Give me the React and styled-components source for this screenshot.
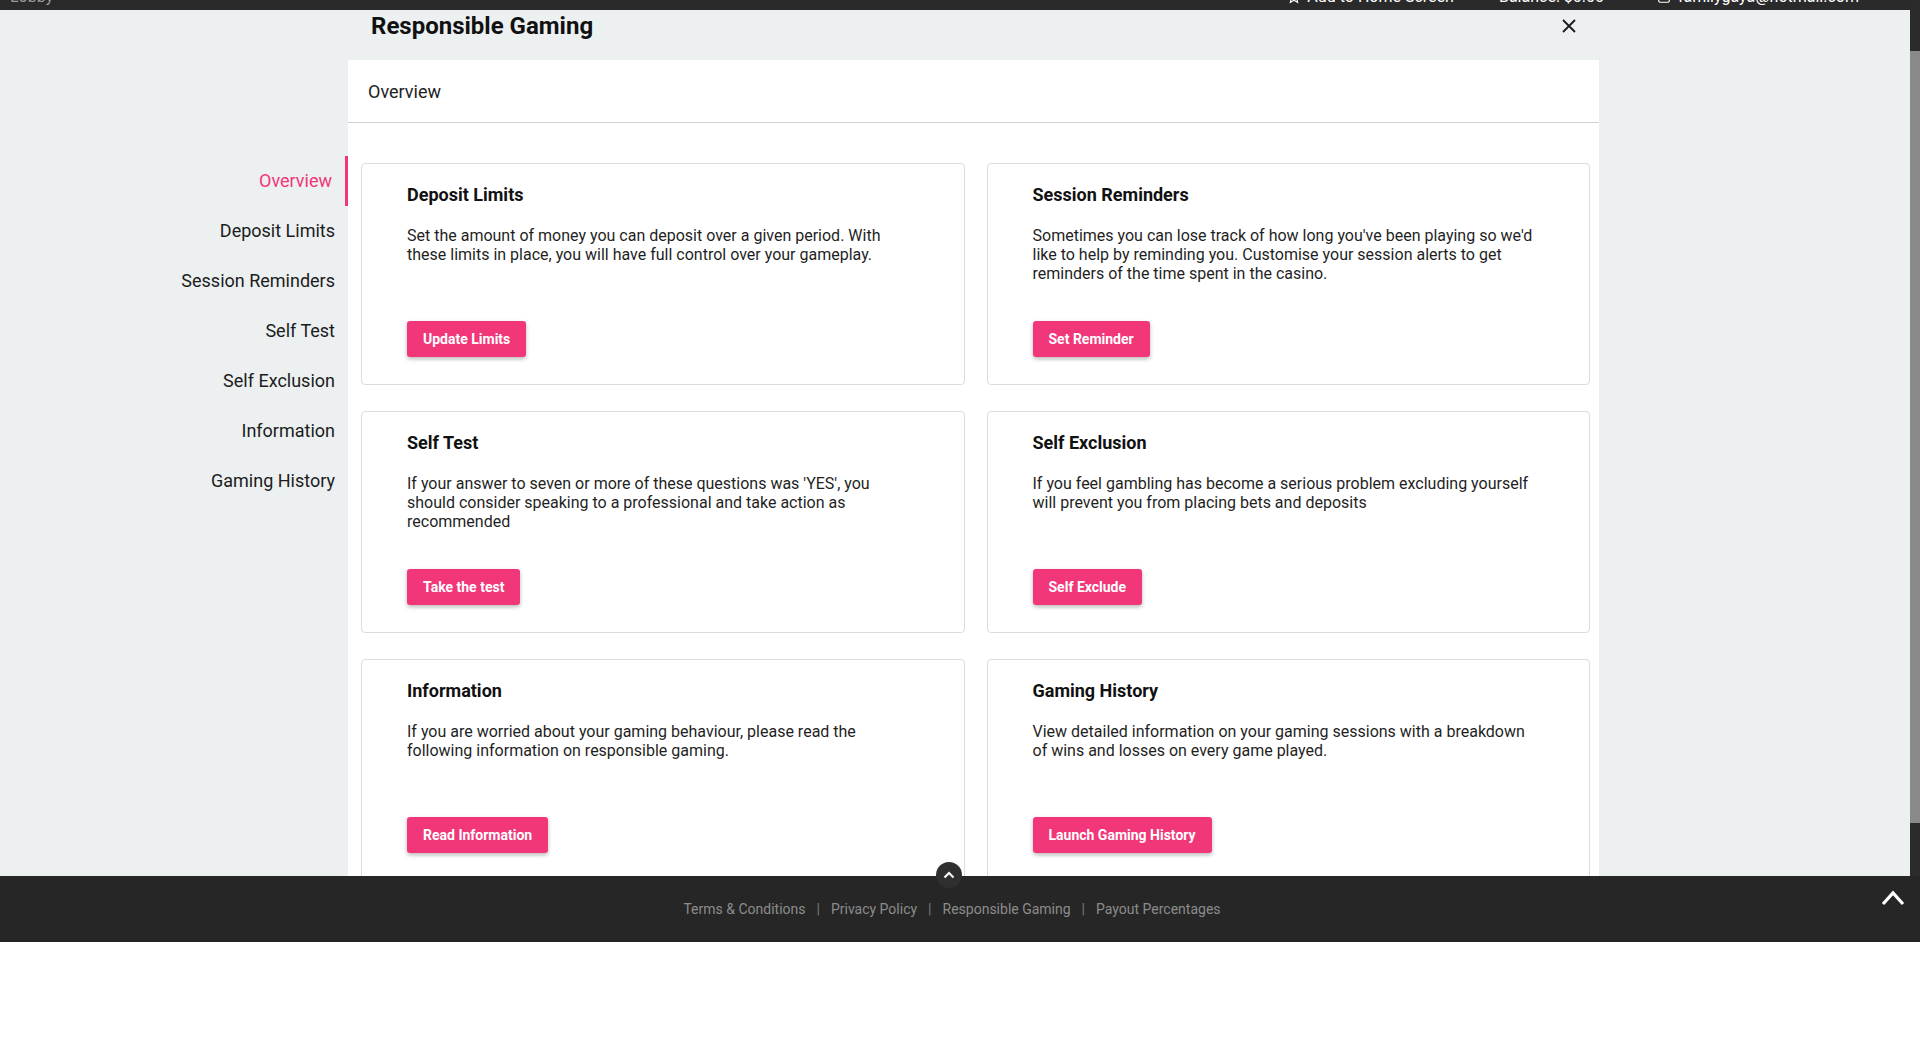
import React from "react";
import styled, { createGlobalStyle } from "styled-components";

const GlobalStyle = createGlobalStyle`
  html, body { margin: 0; padding: 0; background: #ffffff; }
  body { font-family: Roboto, "Liberation Sans", Arial, sans-serif; overflow: hidden; }
  * { box-sizing: border-box; }
`;

const PINK = "#f2367a";

const Page = styled.div`
  width: 1920px;
  height: 1060px;
  display: flex;
  flex-direction: column;
  background: #ffffff;
`;

const Viewport = styled.div`
  height: 876px;
  display: flex;
  flex-direction: row;
`;

const Main = styled.div`
  flex: 1;
  display: flex;
  flex-direction: column;
  min-width: 0;
`;

const TopBar = styled.div`
  height: 10px;
  background: #2a2a2a;
  overflow: hidden;
  display: flex;
  align-items: flex-end;
`;

const TopBarInner = styled.div`
  height: 26px;
  flex: none;
  width: 100%;
  display: flex;
  align-items: center;
  padding: 0 51px 0 10px;
  font-size: 16px;
  line-height: 26px;
  color: #ffffff;
`;

const TopLeft = styled.span`
  color: #9a9a9a;
  flex: 1;
`;

const TopItem = styled.span`
  display: flex;
  align-items: center;
  gap: ${(p) => p.$inner || 8}px;
  margin-left: ${(p) => p.$gap || 45}px;
  white-space: nowrap;
`;

const ScrollRail = styled.div`
  width: 10px;
  flex: none;
  background: #2b2b2b;
  padding-top: 51px;
`;

const Thumb = styled.div`
  height: 772px;
  background: #8a8a8a;
`;

const ModalArea = styled.div`
  flex: 1;
  background: #ecf0f1;
  overflow: hidden;
  display: flex;
  flex-direction: column;
`;

const HeaderRow = styled.div`
  margin-left: 348px;
  width: 1251px;
  height: 50px;
  display: flex;
  align-items: flex-start;
  justify-content: space-between;
  padding: 0 22px 0 23px;
`;

const Title = styled.h1`
  margin: 0;
  font-size: 24px;
  line-height: 32px;
  font-weight: 700;
  color: #111111;
`;

const CloseButton = styled.button`
  border: none;
  background: transparent;
  padding: 0;
  height: 32px;
  width: 16px;
  display: flex;
  align-items: center;
  justify-content: center;
  cursor: pointer;
`;

const Body = styled.div`
  flex: 1;
  display: flex;
  min-height: 0;
`;

const Sidebar = styled.nav`
  width: 348px;
  flex: none;
  padding-top: 96px;
  display: flex;
  flex-direction: column;
`;

const NavItem = styled.a`
  display: block;
  height: 50px;
  line-height: 50px;
  text-align: right;
  padding-right: 13px;
  font-size: 18px;
  color: ${(p) => (p.$active ? PINK : "#1c1c1c")};
  border-right: ${(p) => (p.$active ? `3px solid ${PINK}` : "none")};
  text-decoration: none;
  cursor: pointer;
`;

const Panel = styled.section`
  width: 1251px;
  flex: none;
  background: #ffffff;
  display: flex;
  flex-direction: column;
`;

const PanelHeader = styled.div`
  height: 63px;
  flex: none;
  border-bottom: 1px solid #d0d0d0;
  display: flex;
  align-items: center;
  padding-left: 20px;
  font-size: 18px;
  color: #1e1e1e;
`;

const CardGrid = styled.div`
  display: grid;
  grid-template-columns: 1fr 1fr;
  grid-auto-rows: 222px;
  column-gap: 22px;
  row-gap: 26px;
  padding: 40px 9px 0 13px;
`;

const Card = styled.article`
  border: 1px solid #dcdcdc;
  border-radius: 4px;
  padding: 20px 45px 27px 45px;
  display: flex;
  flex-direction: column;
  align-items: flex-start;
`;

const CardTitle = styled.h2`
  margin: 0;
  font-size: 18px;
  line-height: 22px;
  font-weight: 700;
  color: #111111;
`;

const CardText = styled.p`
  margin: 20px 0 0 0;
  max-width: 508px;
  font-size: 16px;
  line-height: 19px;
  color: #1f1f1f;
`;

const PinkButton = styled.button`
  margin-top: auto;
  height: 36px;
  padding: 0 16px;
  border: none;
  border-radius: 3px;
  background: ${PINK};
  color: #ffffff;
  font-family: Roboto, "Liberation Sans", Arial, sans-serif;
  font-size: 14px;
  font-weight: 700;
  box-shadow: 0 2px 4px rgba(0, 0, 0, 0.28);
  cursor: pointer;
`;

const Footer = styled.footer`
  height: 66px;
  flex: none;
  background: #262626;
  position: relative;
  display: flex;
  align-items: center;
  justify-content: center;
  padding-right: 16px;
`;

const FooterLinks = styled.div`
  display: flex;
  align-items: center;
  font-size: 14px;
  color: #8c8c8c;
`;

const FooterLink = styled.a`
  color: #8c8c8c;
  text-decoration: none;
`;

const Sep = styled.span`
  margin: 0 11px;
  color: #7a7a7a;
`;

const CircleUp = styled.button`
  position: absolute;
  top: -14px;
  left: calc(50% - 24px);
  width: 26px;
  height: 26px;
  border-radius: 50%;
  border: none;
  padding: 0;
  background: #2f2f2f;
  display: flex;
  align-items: center;
  justify-content: center;
`;

const BackTop = styled.button`
  position: absolute;
  top: 14px;
  right: 15px;
  width: 24px;
  height: 16px;
  border: none;
  padding: 0;
  background: transparent;
  display: flex;
  align-items: center;
  justify-content: center;
`;

const cards = [
  {
    title: "Deposit Limits",
    text: "Set the amount of money you can deposit over a given period. With these limits in place, you will have full control over your gameplay.",
    button: "Update Limits",
  },
  {
    title: "Session Reminders",
    text: "Sometimes you can lose track of how long you've been playing so we'd like to help by reminding you. Customise your session alerts to get reminders of the time spent in the casino.",
    button: "Set Reminder",
  },
  {
    title: "Self Test",
    text: "If your answer to seven or more of these questions was 'YES', you should consider speaking to a professional and take action as recommended",
    button: "Take the test",
  },
  {
    title: "Self Exclusion",
    text: "If you feel gambling has become a serious problem excluding yourself will prevent you from placing bets and deposits",
    button: "Self Exclude",
  },
  {
    title: "Information",
    text: "If you are worried about your gaming behaviour, please read the following information on responsible gaming.",
    button: "Read Information",
  },
  {
    title: "Gaming History",
    text: "View detailed information on your gaming sessions with a breakdown of wins and losses on every game played.",
    button: "Launch Gaming History",
  },
];

const navItems = [
  "Overview",
  "Deposit Limits",
  "Session Reminders",
  "Self Test",
  "Self Exclusion",
  "Information",
  "Gaming History",
];

const StarIcon = () => (
  <svg width="14" height="14" viewBox="0 0 24 24" fill="none" stroke="#fff" strokeWidth="2">
    <path d="M12 2l3 6.5 7 .8-5.2 4.8 1.4 7L12 17.6 5.8 21.1l1.4-7L2 9.3l7-.8z" />
  </svg>
);

const UserIcon = () => (
  <svg width="14" height="14" viewBox="0 0 24 24" fill="none" stroke="#fff" strokeWidth="2">
    <rect x="3" y="3" width="18" height="18" rx="2" />
  </svg>
);

export default function App() {
  return (
    <>
      <GlobalStyle />
      <Page>
        <Viewport>
          <Main>
            <TopBar>
              <TopBarInner>
                <TopLeft>Lobby</TopLeft>
                <TopItem $inner={6}>
                  <StarIcon />
                  Add to Home Screen
                </TopItem>
                <TopItem $gap={45}>Balance: $0.00</TopItem>
                <TopItem $gap={53} $inner={7}>
                  <UserIcon />
                  familygaya@hotmail.com
                </TopItem>
              </TopBarInner>
            </TopBar>
            <ModalArea>
              <HeaderRow>
                <Title>Responsible Gaming</Title>
                <CloseButton aria-label="Close">
                  <svg width="14" height="14" viewBox="0 0 14 14">
                    <path d="M1 1L13 13M13 1L1 13" stroke="#1a1a1a" strokeWidth="1.8" />
                  </svg>
                </CloseButton>
              </HeaderRow>
              <Body>
                <Sidebar>
                  {navItems.map((n, i) => (
                    <NavItem key={n} $active={i === 0}>
                      {n}
                    </NavItem>
                  ))}
                </Sidebar>
                <Panel>
                  <PanelHeader>Overview</PanelHeader>
                  <CardGrid>
                    {cards.map((c) => (
                      <Card key={c.title}>
                        <CardTitle>{c.title}</CardTitle>
                        <CardText>{c.text}</CardText>
                        <PinkButton>{c.button}</PinkButton>
                      </Card>
                    ))}
                  </CardGrid>
                </Panel>
              </Body>
            </ModalArea>
          </Main>
          <ScrollRail>
            <Thumb />
          </ScrollRail>
        </Viewport>
        <Footer>
          <CircleUp aria-label="Scroll up">
            <svg width="12" height="8" viewBox="0 0 12 8">
              <path d="M1.5 6.5L6 2l4.5 4.5" stroke="#fff" strokeWidth="2" fill="none" />
            </svg>
          </CircleUp>
          <FooterLinks>
            <FooterLink>Terms &amp; Conditions</FooterLink>
            <Sep>|</Sep>
            <FooterLink>Privacy Policy</FooterLink>
            <Sep>|</Sep>
            <FooterLink>Responsible Gaming</FooterLink>
            <Sep>|</Sep>
            <FooterLink>Payout Percentages</FooterLink>
          </FooterLinks>
          <BackTop aria-label="Back to top">
            <svg width="24" height="16" viewBox="0 0 24 16">
              <path d="M2 14L12 3l10 11" stroke="#fff" strokeWidth="3.2" fill="none" />
            </svg>
          </BackTop>
        </Footer>
      </Page>
    </>
  );
}
